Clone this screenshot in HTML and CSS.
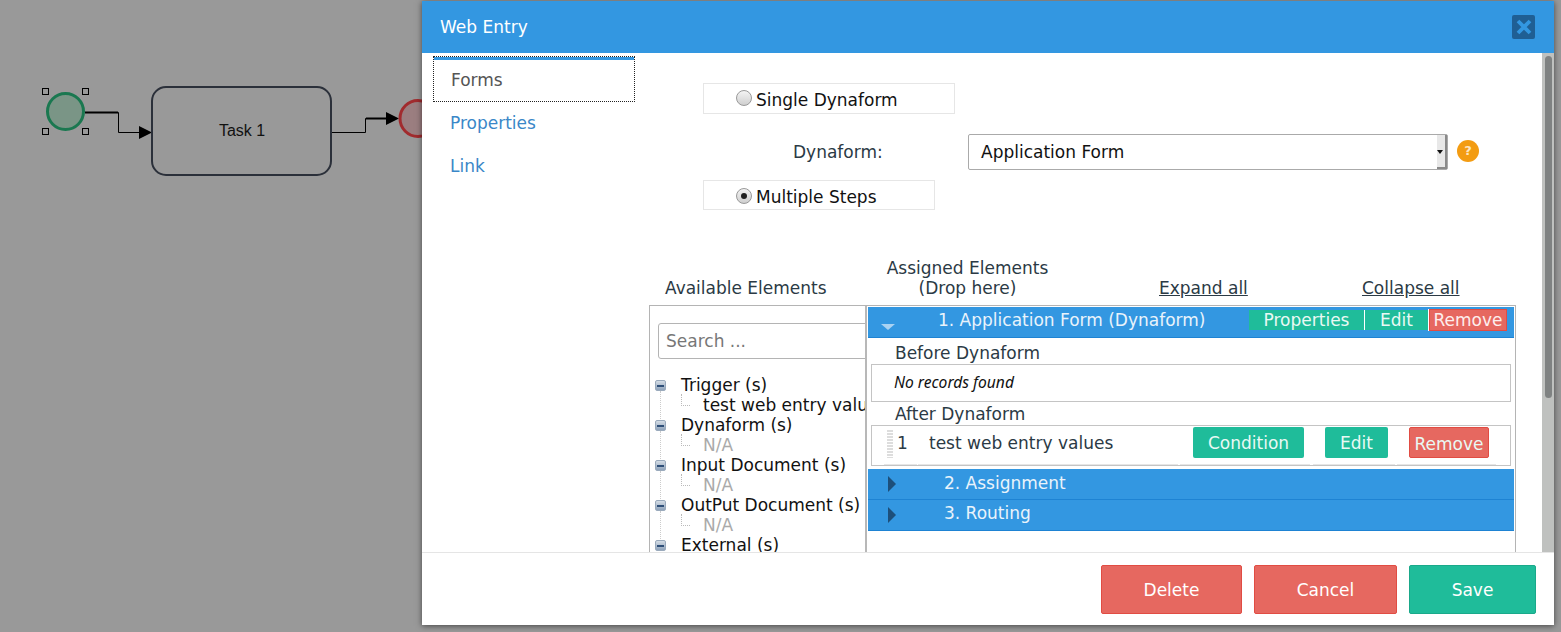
FILE: index.html
```html
<!DOCTYPE html>
<html lang="en">
<head>
  <meta charset="UTF-8">
  <title>Web Entry</title>
  <link rel="stylesheet" href="styles.css">
</head>
<body>
  <svg class="diagram" width="422" height="632" viewBox="0 0 422 632">
    <circle cx="65.5" cy="111.5" r="18" fill="#7a9586" stroke="#1a7850" stroke-width="3"/>
    <g fill="none" stroke="#000" stroke-width="1">
      <rect x="42.5" y="88.5" width="6" height="6"/>
      <rect x="82.5" y="88.5" width="6" height="6"/>
      <rect x="42.5" y="128.5" width="6" height="6"/>
      <rect x="82.5" y="128.5" width="6" height="6"/>
    </g>
    <path d="M85 112.5H118.5V132.5H140" fill="none" stroke="#000" stroke-width="1"/>
    <path d="M85 112.5H118" fill="none" stroke="#000" stroke-width="2"/>
    <path d="M139 126L152 132.5L139 139Z" fill="#000"/>
    <rect x="152" y="87" width="179" height="88" rx="14" fill="#999" stroke="#2b303a" stroke-width="2"/>
    <text x="242" y="136" text-anchor="middle" class="task-label">Task 1</text>
    <path d="M332 132.5H365.5V118.5H388" fill="none" stroke="#000" stroke-width="1"/>
    <path d="M366 118.5H388" fill="none" stroke="#000" stroke-width="2"/>
    <path d="M386 112L399 118.5L386 125Z" fill="#000"/>
    <circle cx="418" cy="118.5" r="18" fill="#9b7e80" stroke="#a12b2e" stroke-width="3"/>
  </svg>

  <div class="modal">
    <div class="modal-head">
      <span class="modal-title">Web Entry</span>
      <span class="modal-close">
        <svg width="16" height="16" viewBox="0 0 16 16"><path d="M2 2L14 14M14 2L2 14" stroke="#3397e1" stroke-width="3.8"/></svg>
      </span>
    </div>

    <div class="modal-body">
      <div class="side-nav">
        <div class="nav-item active">Forms</div>
        <div class="nav-item">Properties</div>
        <div class="nav-item">Link</div>
      </div>

      <div class="main">
        <div class="radio-box single"><span class="radio"></span><span class="radio-text">Single Dynaform</span></div>
        <div class="dyna-row">
          <span class="dyna-label">Dynaform:</span>
          <div class="select">
            <span>Application Form</span>
            <span class="select-btn"></span>
          </div>
          <span class="help">?</span>
        </div>
        <div class="radio-box multiple"><span class="radio checked"></span><span class="radio-text">Multiple Steps</span></div>

        <div class="col-heads">
          <span class="head-available">Available Elements</span>
          <span class="head-assigned">Assigned Elements<br>(Drop here)</span>
          <a class="head-expand">Expand all</a>
          <a class="head-collapse">Collapse all</a>
        </div>

        <div class="panel">
          <div class="available">
            <div class="search">Search ...</div>
            <ul class="tree">
              <li class="group">Trigger (s)</li>
              <li class="leaf">test web entry values</li>
              <li class="group">Dynaform (s)</li>
              <li class="leaf empty">N/A</li>
              <li class="group">Input Document (s)</li>
              <li class="leaf empty">N/A</li>
              <li class="group">OutPut Document (s)</li>
              <li class="leaf empty">N/A</li>
              <li class="group">External (s)</li>
            </ul>
          </div>

          <div class="assigned">
            <div class="step open">
              <span class="arrow-down"></span>
              <span class="step-title">1. Application Form (Dynaform)</span>
              <div class="step-actions">
                <span class="act green wide">Properties</span>
                <span class="act green">Edit</span>
                <span class="act red">Remove</span>
              </div>
            </div>
            <div class="sub-title">Before Dynaform</div>
            <div class="grid-box empty-box">No records found</div>
            <div class="sub-title after">After Dynaform</div>
            <div class="grid-box row-box">
              <span class="grip"></span>
              <span class="row-num">1</span>
              <span class="row-name">test web entry values</span>
              <span class="btn-sm green cond">Condition</span>
              <span class="btn-sm green edit">Edit</span>
              <span class="btn-sm red rem">Remove</span>
            </div>
            <div class="step second">
              <span class="arrow-right"></span>
              <span class="step-title">2. Assignment</span>
            </div>
            <div class="step third">
              <span class="arrow-right"></span>
              <span class="step-title">3. Routing</span>
            </div>
          </div>
        </div>
      </div>

      <div class="scrollbar"><div class="thumb"></div></div>
    </div>

    <div class="modal-foot">
      <button class="btn red delete">Delete</button>
      <button class="btn red cancel">Cancel</button>
      <button class="btn green save">Save</button>
    </div>
  </div>
</body>
</html>
```

FILE: styles.css
```css
html, body { height:100%; }
body { margin:0; background:#999; overflow:hidden; font-family:"DejaVu Sans",sans-serif; font-size:17px; color:#2b3a45; }

.diagram { position:absolute; left:0; top:0; }
.task-label { font-family:"Liberation Sans",sans-serif; font-size:16px; fill:#111; }

.modal {
  position:absolute; left:422px; top:1px; width:1132px; height:624px;
  display:flex; flex-direction:column; background:#fff;
  box-shadow:0 1px 6px rgba(0,0,0,0.55);
}
.modal-head {
  height:52px; flex:none; display:flex; align-items:center; justify-content:space-between;
  padding:0 19px 0 18px; background:#3397e1; color:#fff;
}
.modal-close {
  width:23px; height:24px; display:flex; align-items:center; justify-content:center;
  background:#1f5f94; border-radius:2px;
}

.modal-body { flex:1; display:flex; position:relative; overflow:hidden; }

.side-nav { width:228px; flex:none; padding:3px 0 0 11px; box-sizing:border-box; }
.nav-item { width:202px; height:43px; line-height:43px; padding-left:17px; box-sizing:border-box; color:#3a87c8; }
.nav-item.active {
  height:46px; line-height:46px; color:#555;
  border:1px dotted #222; box-shadow:inset 0 3px 0 #3397e1;
}

.main { flex:1; min-width:0; }
.radio-box {
  display:flex; align-items:center; box-sizing:border-box; border:1px solid #e6e6e6;
  margin-left:53px; padding-left:32px; color:#111;
}
.radio-box.single { width:252px; height:31px; margin-top:30px; }
.radio-box.multiple { width:232px; height:30px; margin-top:10px; }
.radio-text { position:relative; top:1px; }
.radio-box.multiple .radio-text { top:2px; }
.radio {
  width:16px; height:16px; box-sizing:border-box; border-radius:50%; margin-right:4px;
  border:1px solid #999; background:linear-gradient(#f4f4f4,#cfcfcf); display:block; position:relative;
}
.radio-box.single .radio { top:-1px; }
.radio-box.multiple .radio { top:1px; }
.radio.checked::after {
  content:""; position:absolute; left:4px; top:4px; width:6px; height:6px;
  border-radius:50%; background:#222;
}

.dyna-row { display:flex; align-items:center; height:36px; margin-top:20px; }
.dyna-label { width:318px; padding-left:143px; box-sizing:border-box; }
.select {
  width:480px; height:36px; box-sizing:border-box; display:flex; align-items:center; justify-content:space-between;
  border:1px solid #aaa; border-radius:2px; padding-left:12px; color:#111;
}
.select-btn {
  width:10px; height:34px; background:#e8e8e8; border-right:2px solid #8a8a8a; border-bottom:2px solid #8a8a8a;
  box-sizing:border-box; position:relative;
}
.select-btn::after {
  content:""; position:absolute; left:0; top:15px;
  border:3px solid transparent; border-top:4px solid #111; border-bottom:0;
}
.help {
  width:22px; height:22px; margin:-2px 0 0 9px; border-radius:50%; background:#f39c12; color:#fde6c0;
  font-size:13px; font-weight:bold; text-align:center; line-height:22px;
}

.col-heads { position:relative; height:60px; margin:35px 0 0 -1px; line-height:20px; }
.col-heads span, .col-heads a { position:absolute; bottom:7px; white-space:nowrap; }
.head-available { left:16px; }
.head-assigned { left:221px; width:195px; text-align:center; }
.head-expand { left:510px; text-decoration:underline; }
.head-collapse { left:713px; text-decoration:underline; }

.panel {
  display:flex; width:867px; height:300px; margin-left:-1px; box-sizing:border-box;
  border:1px solid #b4b4b4;
}
.available { width:215px; flex:none; overflow:hidden; border-right:2px solid #b8b8b8; }
.search {
  width:240px; height:36px; line-height:34px; box-sizing:border-box; margin:17px 0 0 8px; padding-left:7px;
  border:1px solid #b4b4b4; border-radius:3px; color:#777;
}
.tree { list-style:none; margin:16px 0 0; padding:0; line-height:20px; color:#111; white-space:nowrap; }
.tree li { height:20px; position:relative; }
.group { padding-left:31px; }
.group::before {
  content:""; position:absolute; left:5px; top:5px; width:11px; height:11px; box-sizing:border-box;
  background:linear-gradient(#d5dde6,#8fa3bb); border:1px solid #9aaabc; border-radius:2px;
}
.group::after { content:""; position:absolute; left:7px; top:10px; width:7px; height:2px; background:#2f4f78; }
.leaf { padding-left:53px; }
.leaf::before {
  content:""; position:absolute; left:31px; top:-1px; width:8px; height:11px;
  border-left:1px dotted #bbb; border-bottom:1px dotted #bbb;
}
.leaf::after { content:""; position:absolute; left:10px; top:-4px; height:28px; border-left:1px dotted #ccc; }
.leaf.empty { color:#aaa; }

.assigned { flex:1; min-width:0; position:relative; padding:1px 1px 0; }
.step { position:relative; background:#3397e1; color:#e9f3fb; height:31px; box-sizing:border-box; border-bottom:1px solid #1e83d3; }
.step.open { line-height:26px; }
.step.second { margin-top:3px; line-height:28px; }
.step.third { line-height:26px; }
.step-title { position:absolute; left:76px; top:0; white-space:nowrap; }
.step.open .step-title { left:70px; }
.arrow-down {
  position:absolute; left:13px; top:17px; border:7px solid transparent; border-top:6px solid #a9d2f2; border-bottom:0;
}
.arrow-right {
  position:absolute; left:20px; top:7px; border:8px solid transparent; border-left:8px solid #1d4f7a; border-right:0;
}
.step-actions { position:absolute; left:381px; top:2px; display:flex; height:22px; line-height:20px; }
.act { display:block; text-align:center; color:#e9f9f4; box-sizing:border-box; }
.act.green { background:#1fbc9a; width:63px; height:20px; margin-top:1px; }
.act.green.wide { width:116px; border-right:1px solid #fff; }
.act.red { background:#e66860; width:78px; border:1px solid #e14c43; margin-left:1px; color:#fdeeed; box-shadow:-1px 0 0 #fff; }

.sub-title { margin:4px 0 0 27px; height:22px; line-height:22px; }
.sub-title.after { margin-top:1px; }
.grid-box { margin:0 3px; box-sizing:border-box; border:1px solid #c4c4c4; }
.empty-box { height:38px; line-height:34px; padding-left:22px; font-family:"Noto Sans",sans-serif; font-style:italic; font-size:15.6px; color:#111; }
.row-box { height:41px; position:relative; }
.row-box::after {
  content:""; position:absolute; left:12px; bottom:0; width:612px; height:1px;
  background:linear-gradient(to right,#e6e6e6 0 33px,#fff 33px 34px,#e6e6e6 34px 294px,#fff 294px 296px,#e6e6e6 296px 426px,#fff 426px 429px,#e6e6e6 429px 511px,#fff 511px 513px,#e6e6e6 513px);
}
.grip { position:absolute; left:15px; top:4px; width:6px; height:28px; background:repeating-linear-gradient(#ddd 0 2px,#fff 2px 3px); }
.row-num { position:absolute; left:25px; top:7px; }
.row-name { position:absolute; left:57px; top:7px; white-space:nowrap; }
.btn-sm {
  position:absolute; top:1px; height:31px; line-height:33px; box-sizing:border-box;
  border-radius:2px; text-align:center; color:#e9f9f4;
}
.btn-sm.cond { left:321px; width:111px; }
.btn-sm.edit { left:453px; width:63px; }
.btn-sm.rem { left:537px; width:80px; }

.green { background:#1fbc9a; }
.red { background:#e66860; border:1px solid #e14c43; }

.scrollbar { position:absolute; right:0; top:0; width:12px; bottom:0; background:#bfc1bf; }
.thumb { width:7px; height:342px; margin:3px 0 0 3px; background:#7f8282; border-radius:4px; }

.modal-foot {
  height:73px; flex:none; box-sizing:border-box; border-top:1px solid #e5e5e5;
  display:flex; justify-content:flex-end; align-items:flex-start; padding:12px 18px 0 0; gap:12px;
}
.btn { height:49px; border-radius:2px; font:17px "DejaVu Sans",sans-serif; color:#fff; padding:0; }
.btn.delete { width:141px; }
.btn.cancel { width:143px; }
.btn.save { width:127px; border:1px solid #1aa98a; }
```
